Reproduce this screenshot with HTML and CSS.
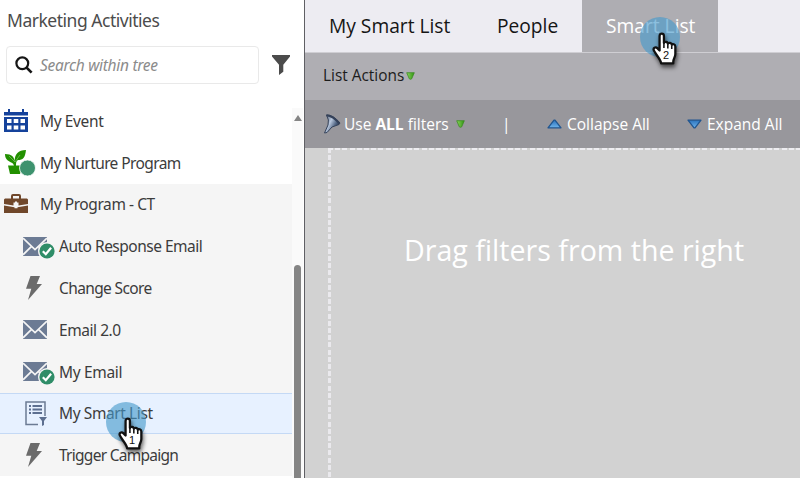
FILE: index.html
```html
<!DOCTYPE html>
<html lang="en">
<head>
<meta charset="utf-8">
<title>Marketing Activities</title>
<link rel="stylesheet" href="styles.css">
</head>
<body>
<svg class="defs" width="0" height="0" aria-hidden="true">
  <defs>
    <linearGradient id="blue" x1="0" y1="0" x2="0" y2="1"><stop offset="0" stop-color="#2b73bd"/><stop offset="1" stop-color="#6db2ea"/></linearGradient>
    <linearGradient id="green" x1="0" y1="0" x2="1" y2="0"><stop offset="0" stop-color="#8bd45c"/><stop offset="1" stop-color="#2f9412"/></linearGradient>
    <linearGradient id="steel" x1="0" y1="0" x2="1" y2=".6"><stop offset="0" stop-color="#3b475c"/><stop offset=".45" stop-color="#b9c8de"/><stop offset=".75" stop-color="#536785"/><stop offset="1" stop-color="#1d2a44"/></linearGradient>
    <symbol id="mail" viewBox="0 0 24 19"><path fill="#6c7b94" d="M0 0h24v19H0z"/><path d="M0 1.200 12 12.500 24 1.200M0 17.800l8.800-8.600M24 17.800l-8.800-8.600" fill="none" stroke="#f5f5f5" stroke-width="1.700"/></symbol>
    <symbol id="check" viewBox="0 0 16 16"><circle cx="8" cy="8" r="7.600" fill="#2f8d68"/><path d="m3.800 8.200 3 3 5.300-6.500" fill="none" stroke="#fff" stroke-width="2.200"/></symbol>
    <symbol id="bolt" viewBox="0 0 16 24"><path fill="#6b6b6b" d="M4.500 0H14l-3.300 8H16L2 24l3.300-11.300H0z"/></symbol>
    <symbol id="hand" viewBox="0 0 28 34"><path d="M10.200 18V3.800c0-3 4.200-3 4.200 0v7c.4-1.800 3.800-1.500 3.800.7.7-1.600 3.800-1.100 3.800 1 .8-1.300 3.500-.7 3.500 1.600v7.300c0 3-1.800 4-2 7.400v1.700H11.700c-.5-4-4.300-7.300-6.900-12.200-1.500-2.800 1.500-4.400 3.400-2.400z" fill="#fff" stroke="#111" stroke-width="2.200" stroke-linejoin="round"/><path d="M14.400 11v4.500M18.200 12v4M22 13v3.500" fill="none" stroke="#111" stroke-width="1.500"/></symbol>
    <symbol id="drop" viewBox="0 0 9 8"><path d="M.7.7h7.600L5.700 6.800q-1.200 1-2.400 0z" fill="url(#green)" stroke="#3d8b24" stroke-width=".8"/></symbol>
  </defs>
</svg>
<div class="app">
  <aside class="side">
    <h1><span>Marketing Activities</span></h1>
    <div class="search-row">
      <div class="search">
        <svg width="18" height="18" viewBox="0 0 18 18"><circle cx="7.300" cy="7.300" r="5.900" fill="none" stroke="#161616" stroke-width="2.200"/><path d="m11.600 11.600 5 5" stroke="#161616" stroke-width="2.700"/></svg>
        <span>Search within tree</span>
      </div>
      <svg width="18" height="20" viewBox="0 0 18 20"><path fill="#4b4b4b" d="M0 0h18v1.500l-6.700 8.200v7L7 20V9.700L0 1.500z"/></svg>
    </div>
    <div class="tree">
      <ul>
        <li><svg class="ic" width="24" height="23" viewBox="0 0 24 23"><path fill="#15429b" d="M0 3h4V0h2v3h12V0h2v3h4v3.500H0zM0 8h24v15H0z"/><path fill="#fff" d="M3 10h4.500v4H3zM9.700 10h4.600v4H9.700zM16.500 10H21v4h-4.500zM3 16.500h4.500v4H3zM9.700 16.500h4.600v4H9.700zM16.500 16.500H21v4h-4.500z"/></svg><span class="w-event">My Event</span></li>
        <li><svg class="plant" width="31" height="26" viewBox="0 0 31 26"><path fill="#229000" d="M3 15.500h14L15 24H5z"/><path fill="#229000" d="M9 16C9 11 0 13 0 4c7 0 9 3 9.600 7C10 4 13 0 21 0c-1 8-3 10-8 10-2 1-2 3-2 6z"/><path d="m4 6 6 6 5-7" fill="none" stroke="#fff" stroke-width=".6" opacity=".5"/><circle cx="22.500" cy="18" r="8" fill="#3d926e" stroke="#fff" stroke-width=".8"/></svg><span class="w-nurture">My Nurture Program</span></li>
        <li class="gray"><svg class="ic" width="24" height="20" viewBox="0 0 24 20"><path fill="none" stroke="#70472a" stroke-width="2" d="M8 5V2q0-1 1-1h6q1 0 1 1v3"/><path fill="#70472a" d="M1 4.500h22l1 1V10l-9.500 1.500V8.500h-5v3L0 10V5.500zM0 11.500l10.500 1.800v1h3v-1L24 11.500V19H0z"/><path fill="#f5f5f5" d="M11 7.500h2v4h-2z"/></svg><span class="w-program">My Program - CT</span></li>
        <li class="gray child"><svg class="ic" width="24" height="19"><use href="#mail"/></svg><svg class="badge" width="18" height="18" viewBox="0 0 18 18"><circle cx="9" cy="9" r="9" fill="#f5f5f5"/><use href="#check" x="1" y="1" width="16" height="16"/></svg><span class="w-auto">Auto Response Email</span></li>
        <li class="gray child"><svg class="bolt" width="16" height="24"><use href="#bolt"/></svg><span class="w-score">Change Score</span></li>
        <li class="gray child"><svg class="ic" width="24" height="19"><use href="#mail"/></svg><span class="w-email2">Email 2.0</span></li>
        <li class="gray child"><svg class="ic" width="24" height="19"><use href="#mail"/></svg><svg class="badge" width="18" height="18" viewBox="0 0 18 18"><circle cx="9" cy="9" r="9" fill="#f5f5f5"/><use href="#check" x="1" y="1" width="16" height="16"/></svg><span class="w-myemail">My Email</span></li>
        <li class="gray child selected"><svg class="list" width="22" height="25" viewBox="0 0 22 25"><path d="M13 23.500H1V1h19v14" fill="none" stroke="#6c7b94" stroke-width="1.500"/><path d="M4 5h2M7.500 5H17M4 8.500h2M7.500 8.500H17M4 12h2M7.500 12H17" stroke="#5d6f90" stroke-width="1.800"/><path fill="#5d6f90" d="M14 16h8l-3 4v4l-2 1v-5z"/></svg><span class="w-smart">My Smart List</span></li>
        <li class="gray child"><svg class="bolt" width="16" height="24"><use href="#bolt"/></svg><span class="w-trigger">Trigger Campaign</span></li>
      </ul>
      <div class="scroll"><i class="up"></i><i class="thumb"></i></div>
    </div>
  </aside>
  <main>
    <nav>
      <a class="tab t1"><span>My Smart List</span></a>
      <a class="tab t2"><span>People</span></a>
      <a class="tab active"><span>Smart List</span></a>
    </nav>
    <div class="actions"><span>List Actions</span><svg width="9" height="8"><use href="#drop"/></svg></div>
    <div class="filters">
      <svg class="funnel" width="18" height="20" viewBox="0 0 18 20"><path d="M3.500 1Q10 .5 16.500 8.500 17 10 16 10.500L9 13 4 18.500 1.500 19 5 11Q6.500 6 3.500 1z" fill="url(#steel)" stroke="#35435b" stroke-width="1"/><path d="M3.500 1.200Q10 2 16.500 9.500" fill="none" stroke="#344159" stroke-width="2"/></svg>
      <span class="use">Use <b>ALL</b> filters</span>
      <svg class="d2" width="9" height="8"><use href="#drop"/></svg>
      <span class="bar">|</span>
      <svg class="tri1" width="15" height="10" viewBox="0 0 15 10"><path d="m1 8.800 6-7.600h1l6 7.600z" fill="url(#blue)" stroke="#20558f" stroke-width="1.300" stroke-linejoin="round"/></svg>
      <span class="collapse">Collapse All</span>
      <svg class="tri2" width="15" height="10" viewBox="0 0 15 10"><path d="m1 1.200 6 7.600h1l6-7.600z" fill="url(#blue)" stroke="#20558f" stroke-width="1.300" stroke-linejoin="round"/></svg>
      <span class="expand">Expand All</span>
    </div>
    <section class="canvas">
      <div class="dropzone"><p><span>Drag filters from the right</span></p></div>
    </section>
  </main>
  <div class="pointer p1"><svg width="29" height="35"><use href="#hand"/></svg><b>1</b></div>
  <div class="pointer p2"><svg width="29" height="35"><use href="#hand"/></svg><b>2</b></div>
</div>
</body>
</html>
```
FILE: styles.css
```css
* { box-sizing: border-box; }
body { margin: 0; overflow: hidden; background: #fff; font-family: "Open Sans", "Noto Sans", sans-serif; }
.defs { position: absolute; }
svg { display: block; flex: none; }
span { white-space: nowrap; }
.app { position: relative; display: flex; width: 800px; height: 478px; overflow: hidden; }
.side { display: flex; flex-direction: column; width: 305px; flex: none; border-right: 1.500px solid #5f5f64; font-family: "Noto Sans", sans-serif; color: #3c3c3c; }
h1 { margin: 0; height: 46px; padding: 8px 0 0 7px; font-size: 17.5px; line-height: 25px; font-weight: 400; color: #4c4c4c; letter-spacing: -.48px; }
.search-row { display: flex; align-items: center; height: 38px; padding-left: 6px; gap: 13px; }
.search { display: flex; align-items: center; gap: 7px; width: 253px; height: 38px; padding-left: 8px; border: 1px solid #e9e9e9; border-radius: 4px; color: #8b8b8b; font-size: 15.5px; font-style: italic; letter-spacing: -.3px; }
.tree { display: flex; flex: 1; margin-top: 16px; }
ul { width: 292px; margin: 0; padding: 0; list-style: none; }
li { display: flex; align-items: center; height: 41.8px; padding-left: 4px; position: relative; font-size: 15.5px; line-height: 24px; }
li span { margin-left: 12px; }
.w-event { letter-spacing: -.38px; }
.w-nurture { letter-spacing: -.6px; }
.w-program { letter-spacing: -.42px; }
.w-auto { letter-spacing: -.5px; }
.w-score { letter-spacing: -.62px; }
.w-email2 { letter-spacing: -.45px; }
.w-myemail { letter-spacing: -.33px; }
.w-smart { letter-spacing: -.4px; }
.w-trigger { letter-spacing: -.73px; }
.gray { background: #f5f5f5; }
.child { padding-left: 23px; }
.plant { margin: 0 -8px 0 1px; }
.bolt { margin: 0 5px 0 3px; }
.list { margin: 0 0 0 2px; }
.badge { position: absolute; left: 38px; top: 17px; }
.selected { background: #e7f1ff; border-top: 1px solid #c4d9f5; border-bottom: 1px solid #c4d9f5; }
.scroll { display: flex; flex-direction: column; align-items: center; width: 11px; margin-top: 8px; background: #fafafa; }
.up { margin-top: 7px; border: 4px solid transparent; border-top: 0; border-bottom: 6px solid #858585; }
.thumb { width: 7px; flex: 1; margin-top: 144px; border-radius: 4px 4px 0 0; background: #858585; }
main { flex: 1; display: flex; flex-direction: column; min-width: 0; }
nav { display: flex; height: 52px; background: #edecf2; font-size: 19.2px; color: #151515; }
.tab { display: flex; align-items: center; height: 52px; padding-bottom: 1px; }
.t1 { width: 168px; padding-left: 24px; }
.t2 { width: 109px; padding-left: 24px; }
.active { width: 136px; padding-left: 24px; background: #aeadb2; color: #fff; }
.actions { display: flex; align-items: center; gap: 2px; height: 48px; padding: 0 0 2px 18px; border-top: 1px solid #cfced3; background: #afaeb3; color: #1c1c1c; font-size: 15.4px; }
.filters { display: flex; align-items: center; height: 48px; padding-left: 18px; background: #98979c; color: #fff; font-size: 15.5px; }
.use { margin-left: 3px; width: 112px; }
.bar { margin: 0 0 0 37px; width: 45px; }
.collapse { margin-left: 5px; width: 120px; }
.expand { margin-left: 5px; }
.canvas { flex: 1; display: flex; padding-left: 23px; background: #d2d2d2; }
.dropzone { flex: 1; padding: 2px 0 0 3px; background: repeating-linear-gradient(90deg, #eeedf1 0 5px, transparent 5px 7.200px) 0 0 / 100% 2px no-repeat, repeating-linear-gradient(180deg, #eae9ed 0 5px, transparent 5px 7.200px) 0 0 / 3px 100% no-repeat; }
.dropzone p { margin: 80px 0 0 73px; font-size: 28.6px; line-height: 40px; color: #fff; }
.pointer { position: absolute; width: 40px; height: 40px; border-radius: 50%; background: rgba(69, 153, 203, .62); }
.pointer svg { position: absolute; left: 9px; top: 15px; filter: drop-shadow(1px 3px 2px rgba(0,0,0,.6)); }
.pointer b { position: absolute; left: 23px; top: 32px; font: 11px "Liberation Sans", sans-serif; color: #111; }
.p1 { left: 106px; top: 402px; }
.p2 { left: 640px; top: 17px; }
```
